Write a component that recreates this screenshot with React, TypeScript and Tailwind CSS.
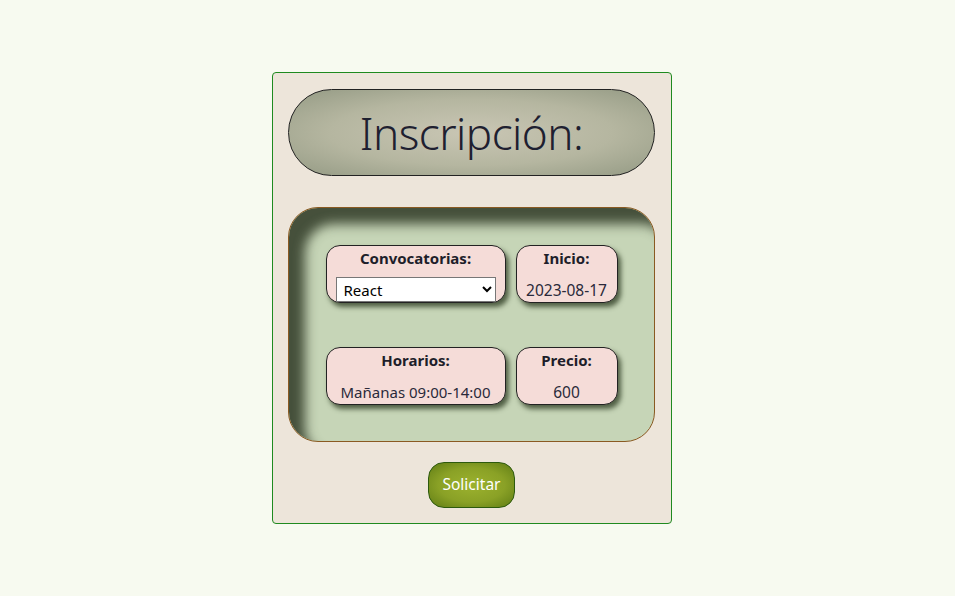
import React from "react";

const InfoBox = ({
  title,
  children,
  wide,
}: {
  title: string;
  children: React.ReactNode;
  wide?: boolean;
}) => (
  <div
    className={`flex h-[58px] flex-col items-center rounded-[14px] border border-[#222] bg-[#f5dcd8] pt-[2px] shadow-[3px_4px_5px_rgba(40,55,30,0.75)] ${
      wide ? "w-[180px]" : "w-[102px]"
    }`}
  >
    <h4 className="text-[15px] font-bold leading-[20px] text-[#1e1e2a]">{title}</h4>
    {children}
  </div>
);

export default function App() {
  return (
    <div className="flex min-h-[596px] justify-center bg-[#f7faf0] pr-[12px] pt-[72px] font-['Noto_Sans',sans-serif]">
      <div className="flex h-[452px] w-[400px] flex-col items-center rounded-[4px] border border-[#1f8a1f] bg-[#ede5da] p-4">
        <div className="flex h-[87px] w-[367px] shrink-0 items-center justify-center rounded-full border border-[#222] bg-[radial-gradient(ellipse_at_center,#c9c6b4_0%,#b5b6a0_55%,#949a84_100%)]">
          <h1 className="text-[44px] font-light leading-none tracking-[-0.5px] text-[#1e2030]">
            Inscripción:
          </h1>
        </div>

        <div className="mt-[31px] grid h-[235px] w-[367px] shrink-0 grid-cols-[180px_102px] content-between justify-center gap-x-[10px] rounded-[30px] border border-[#8a5a22] bg-[#c6d5b7] pb-[36px] pt-[37px] shadow-[inset_16px_16px_12px_rgba(55,65,45,0.9)]">
          <InfoBox title="Convocatorias:" wide>
            <select className="mt-[9px] h-[25px] w-[160px] border border-[#777] bg-white px-[3px] text-[15px] text-black">
              <option>React</option>
            </select>
          </InfoBox>
          <InfoBox title="Inicio:">
            <p className="mt-[12px] text-[15.5px] leading-[20px] text-[#2a2a3a]">2023-08-17</p>
          </InfoBox>
          <InfoBox title="Horarios:" wide>
            <p className="mt-[12px] text-[15px] leading-[20px] text-[#2a2a3a]">Mañanas 09:00-14:00</p>
          </InfoBox>
          <InfoBox title="Precio:">
            <p className="mt-[12px] text-[15.5px] leading-[20px] text-[#2a2a3a]">600</p>
          </InfoBox>
        </div>

        <button className="mt-[20px] h-[46px] w-[87px] shrink-0 rounded-[16px] border border-[#2d5a0e] bg-[radial-gradient(ellipse_at_center,#9cb22e_0%,#8aa126_55%,#5f7c14_100%)] text-[15.5px] text-white">
          Solicitar
        </button>
      </div>
    </div>
  );
}
